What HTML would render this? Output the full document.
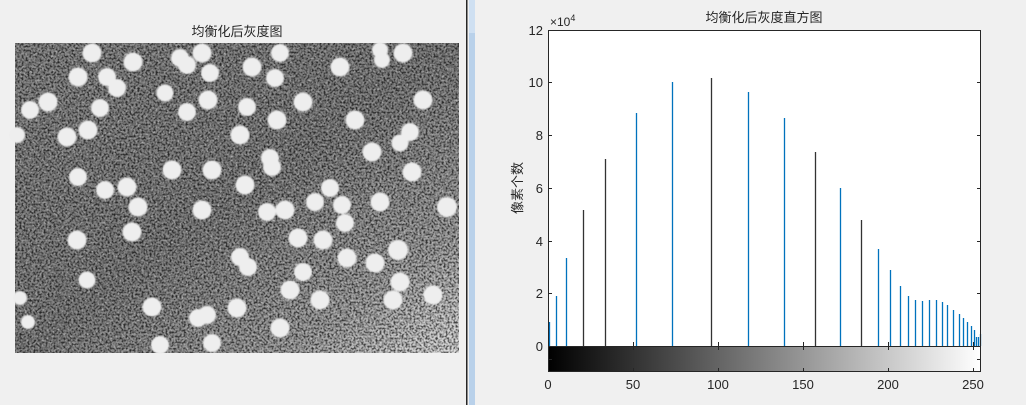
<!DOCTYPE html>
<html><head><meta charset="utf-8"><style>
html,body{margin:0;padding:0;background:#f0f0f0;}
body{width:1026px;height:405px;overflow:hidden;position:relative;font-family:"Liberation Sans","Noto Sans CJK SC",sans-serif;}
svg{position:absolute;left:0;top:0;}
</style></head><body>
<svg width="1026" height="405" viewBox="0 0 1026 405" font-family="Liberation Sans, Noto Sans CJK SC, sans-serif">
<defs>
<filter id="nz" x="0" y="0" width="100%" height="100%">
<feTurbulence type="fractalNoise" baseFrequency="0.5" numOctaves="2" seed="3"/>
<feColorMatrix type="matrix" values="0 0 0 0 0  0 0 0 0 0  0 0 0 0 0  0 0 0 -3 1.8"/>
</filter>
<filter id="nw" x="0" y="0" width="100%" height="100%">
<feTurbulence type="fractalNoise" baseFrequency="0.45" numOctaves="2" seed="7"/>
<feColorMatrix type="matrix" values="0 0 0 0 1  0 0 0 0 1  0 0 0 0 1  0 0 0 3 -1.6"/>
</filter>
<linearGradient id="bg" x1="0" y1="0" x2="1" y2="1">
<stop offset="0" stop-color="#858585"/><stop offset="0.5" stop-color="#7e7e7e"/><stop offset="0.8" stop-color="#a0a0a0"/><stop offset="1" stop-color="#dcdcdc"/>
</linearGradient>
<linearGradient id="cb" x1="0" y1="0" x2="1" y2="0">
<stop offset="0" stop-color="#000"/><stop offset="1" stop-color="#fff"/>
</linearGradient>
<filter id="bl"><feGaussianBlur stdDeviation="0.8"/></filter>
</defs>
<text x="237" y="36" font-size="13" fill="#262626" text-anchor="middle">均衡化后灰度图</text>
<rect x="15" y="43" width="444" height="310" fill="url(#bg)"/>
<rect x="15" y="43" width="444" height="310" fill="#000" filter="url(#nz)" opacity="0.7"/>
<rect x="15" y="43" width="444" height="310" filter="url(#nw)" opacity="0.4"/>
<g fill="#eeeeee" filter="url(#bl)">
<circle cx="92" cy="53" r="9.5"/><circle cx="133" cy="62" r="9.5"/><circle cx="180" cy="58" r="9"/><circle cx="187" cy="65" r="9"/><circle cx="202" cy="53" r="9.5"/><circle cx="210" cy="73" r="9"/><circle cx="252" cy="67" r="9.5"/><circle cx="280" cy="53" r="9"/><circle cx="275" cy="78" r="9"/><circle cx="340" cy="67" r="9.5"/><circle cx="380" cy="50" r="8"/><circle cx="382" cy="60" r="8"/><circle cx="403" cy="53" r="9.5"/><circle cx="78" cy="77" r="9.5"/><circle cx="107" cy="77" r="9"/><circle cx="117" cy="88" r="9"/><circle cx="165" cy="93" r="8.5"/><circle cx="208" cy="100" r="9.5"/><circle cx="247" cy="107" r="9"/><circle cx="303" cy="102" r="9.5"/><circle cx="423" cy="100" r="9.5"/><circle cx="48" cy="102" r="9.5"/><circle cx="30" cy="110" r="9"/><circle cx="100" cy="108" r="9"/><circle cx="187" cy="112" r="9"/><circle cx="277" cy="120" r="9.5"/><circle cx="355" cy="120" r="9.5"/><circle cx="17" cy="135" r="8"/><circle cx="67" cy="137" r="9.5"/><circle cx="88" cy="130" r="9.5"/><circle cx="240" cy="135" r="9.5"/><circle cx="410" cy="132" r="9"/><circle cx="400" cy="143" r="8.5"/><circle cx="372" cy="152" r="9.5"/><circle cx="270" cy="158" r="9"/><circle cx="272" cy="167" r="9"/><circle cx="172" cy="170" r="9.5"/><circle cx="212" cy="170" r="9.5"/><circle cx="412" cy="172" r="9.5"/><circle cx="78" cy="177" r="9"/><circle cx="245" cy="185" r="9.5"/><circle cx="105" cy="190" r="9"/><circle cx="127" cy="187" r="9.5"/><circle cx="330" cy="188" r="9"/><circle cx="138" cy="207" r="9.5"/><circle cx="202" cy="210" r="9.5"/><circle cx="267" cy="212" r="9"/><circle cx="285" cy="210" r="9.5"/><circle cx="315" cy="202" r="9"/><circle cx="342" cy="205" r="9"/><circle cx="345" cy="223" r="9"/><circle cx="380" cy="202" r="9.5"/><circle cx="447" cy="207" r="10"/><circle cx="132" cy="232" r="9.5"/><circle cx="77" cy="240" r="9.5"/><circle cx="298" cy="238" r="9.5"/><circle cx="323" cy="240" r="9.5"/><circle cx="398" cy="250" r="10"/><circle cx="240" cy="257" r="9"/><circle cx="248" cy="267" r="9"/><circle cx="347" cy="258" r="9.5"/><circle cx="375" cy="263" r="9.5"/><circle cx="303" cy="272" r="9"/><circle cx="87" cy="280" r="8.5"/><circle cx="400" cy="282" r="9.5"/><circle cx="290" cy="290" r="9.5"/><circle cx="320" cy="300" r="9.5"/><circle cx="393" cy="300" r="9.5"/><circle cx="433" cy="295" r="9.5"/><circle cx="152" cy="307" r="9.5"/><circle cx="237" cy="308" r="9.5"/><circle cx="198" cy="318" r="9"/><circle cx="207" cy="315" r="9"/><circle cx="280" cy="328" r="9.5"/><circle cx="160" cy="345" r="9"/><circle cx="212" cy="343" r="9"/><circle cx="28" cy="322" r="7"/><circle cx="20" cy="298" r="7"/>
</g>
<rect x="466" y="0" width="1.5" height="405" fill="#262626"/>
<rect x="469" y="0" width="6" height="405" fill="#b9d1ea"/>
<rect x="469" y="0" width="6" height="33" fill="#cfe0f2"/>
<text x="764" y="22" font-size="13" fill="#262626" text-anchor="middle">均衡化后灰度直方图</text>
<rect x="548" y="30" width="433" height="316" fill="#fff"/>
<g stroke="#0072bd" stroke-width="1.3">
<line x1="549.5" y1="346" x2="549.5" y2="322"/><line x1="556.5" y1="346" x2="556.5" y2="296"/><line x1="566.5" y1="346" x2="566.5" y2="258"/><line x1="583.5" y1="346" x2="583.5" y2="210" stroke="#333"/><line x1="605.5" y1="346" x2="605.5" y2="159" stroke="#333"/><line x1="636.5" y1="346" x2="636.5" y2="113"/><line x1="672.5" y1="346" x2="672.5" y2="82"/><line x1="711.5" y1="346" x2="711.5" y2="78" stroke="#333"/><line x1="748.5" y1="346" x2="748.5" y2="92"/><line x1="784.5" y1="346" x2="784.5" y2="118"/><line x1="815.5" y1="346" x2="815.5" y2="152" stroke="#333"/><line x1="840.5" y1="346" x2="840.5" y2="188"/><line x1="861.5" y1="346" x2="861.5" y2="220" stroke="#333"/><line x1="878.5" y1="346" x2="878.5" y2="249"/><line x1="890.5" y1="346" x2="890.5" y2="270"/><line x1="900.5" y1="346" x2="900.5" y2="286"/><line x1="908.5" y1="346" x2="908.5" y2="296"/><line x1="915.5" y1="346" x2="915.5" y2="300"/><line x1="922.5" y1="346" x2="922.5" y2="301"/><line x1="929.5" y1="346" x2="929.5" y2="300"/><line x1="936.5" y1="346" x2="936.5" y2="300"/><line x1="942.5" y1="346" x2="942.5" y2="302"/><line x1="947.5" y1="346" x2="947.5" y2="305"/><line x1="953.5" y1="346" x2="953.5" y2="310"/><line x1="959.5" y1="346" x2="959.5" y2="314"/><line x1="963.5" y1="346" x2="963.5" y2="318"/><line x1="967.5" y1="346" x2="967.5" y2="322"/><line x1="971.5" y1="346" x2="971.5" y2="326"/><line x1="974.5" y1="346" x2="974.5" y2="330"/><line x1="976.5" y1="346" x2="976.5" y2="337"/><line x1="978.5" y1="346" x2="978.5" y2="337"/><line x1="980.5" y1="346" x2="980.5" y2="334"/>
</g>
<rect x="548" y="346" width="433" height="26" fill="url(#cb)"/>
<g stroke="#262626" stroke-width="1" fill="none">
<rect x="548.5" y="30.5" width="432" height="341"/>
<line x1="548" y1="346.5" x2="981" y2="346.5"/>
<line x1="548" y1="82.5" x2="552" y2="82.5"/><line x1="548" y1="135.5" x2="552" y2="135.5"/><line x1="548" y1="188.5" x2="552" y2="188.5"/><line x1="548" y1="241.5" x2="552" y2="241.5"/><line x1="548" y1="293.5" x2="552" y2="293.5"/>
<line x1="977" y1="82.5" x2="981" y2="82.5"/><line x1="977" y1="135.5" x2="981" y2="135.5"/><line x1="977" y1="188.5" x2="981" y2="188.5"/><line x1="977" y1="241.5" x2="981" y2="241.5"/><line x1="977" y1="293.5" x2="981" y2="293.5"/>
<line x1="977" y1="359.5" x2="981" y2="359.5"/><line x1="548" y1="359.5" x2="552" y2="359.5"/>
<line x1="633.5" y1="342" x2="633.5" y2="350"/><line x1="718.5" y1="342" x2="718.5" y2="350"/><line x1="803.5" y1="342" x2="803.5" y2="350"/><line x1="888.5" y1="342" x2="888.5" y2="350"/><line x1="973.5" y1="342" x2="973.5" y2="350"/>
<line x1="633.5" y1="368" x2="633.5" y2="372"/><line x1="718.5" y1="368" x2="718.5" y2="372"/><line x1="803.5" y1="368" x2="803.5" y2="372"/><line x1="888.5" y1="368" x2="888.5" y2="372"/><line x1="973.5" y1="368" x2="973.5" y2="372"/>
</g>
<g font-size="13" fill="#262626" text-anchor="end">
<text x="543" y="35">12</text><text x="543" y="87">10</text><text x="543" y="140">8</text><text x="543" y="193">6</text><text x="543" y="246">4</text><text x="543" y="298">2</text><text x="543" y="351">0</text>
</g>
<text x="550" y="26" font-size="12" fill="#262626">×10<tspan dy="-5" font-size="9">4</tspan></text>
<g font-size="13" fill="#262626" text-anchor="middle">
<text x="548" y="389">0</text><text x="633" y="389">50</text><text x="718" y="389">100</text><text x="803" y="389">150</text><text x="888" y="389">200</text><text x="973" y="389">250</text>
</g>
<text transform="translate(522,188) rotate(-90)" font-size="13" fill="#262626" text-anchor="middle">像素个数</text>
</svg>
</body></html>
